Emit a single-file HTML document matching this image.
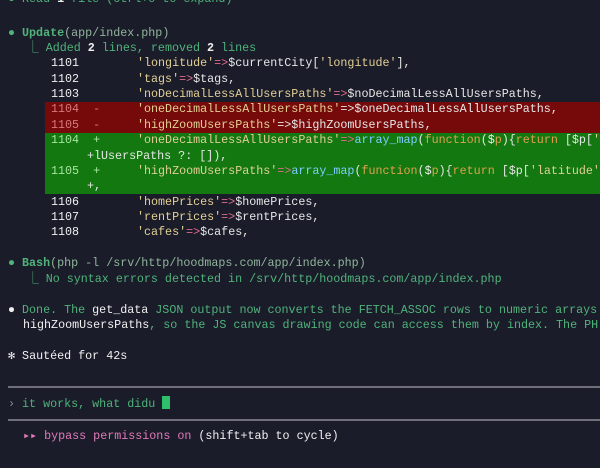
<!DOCTYPE html>
<html><head><meta charset="utf-8"><style>
html,body{margin:0;padding:0;}
body{width:600px;height:468px;background:#1b1c2a;overflow:hidden;position:relative;font-family:"Liberation Mono","DejaVu Sans Mono",monospace;font-size:11.7px;color:#e6e6e6;}
.l{position:absolute;white-space:pre;line-height:15px;height:15px;}
.g{color:#4fb37a}.w{color:#f0f0f0}.b{font-weight:bold}
.s{color:#e2cf94}.o{color:#e06c8a}.c{color:#7dcfff}.f{color:#e0a050}.v{color:#eeeeee}
.band{position:absolute;left:45px;width:555px;}
.gr{color:#8a8f98}
.pk{color:#e07ab8}
</style></head><body>
<div class="l g" style="left:8px;top:-8px">● Read <span class="w b">1</span> file (ctrl+o to expand)</div>
<div class="l" style="left:8px;top:26px"><span class="g">●</span> <span class="g b">Update</span><span class="g" style="color:#8fb59a">(app/index.php)</span></div>
<div class="l g" style="left:27px;top:41px">⎿ Added <span class="w b">2</span> lines, removed <span class="w b">2</span> lines</div>

<div class="band" style="top:102px;height:31px;background:#760a0a"></div>
<div class="band" style="top:133px;height:61px;background:#12780f"></div>

<div class="l w" style="left:51px;top:56px">1101</div>
<div class="l" style="left:137px;top:56px"><span class="s">'longitude'</span><span class="o">=&gt;</span>$currentCity[<span class="s">'longitude'</span>],</div>
<div class="l w" style="left:51px;top:72px">1102</div>
<div class="l" style="left:137px;top:72px"><span class="s">'tags'</span><span class="o">=&gt;</span>$tags,</div>
<div class="l w" style="left:51px;top:87px">1103</div>
<div class="l" style="left:137px;top:87px"><span class="s">'noDecimalLessAllUsersPaths'</span><span class="o">=&gt;</span>$noDecimalLessAllUsersPaths,</div>

<div class="l" style="left:51px;top:102px;color:#d87a7a">1104  -</div>
<div class="l" style="left:137px;top:102px"><span class="s">'oneDecimalLessAllUsersPaths'</span>=&gt;$oneDecimalLessAllUsersPaths,</div>
<div class="l" style="left:51px;top:118px;color:#d87a7a">1105  -</div>
<div class="l" style="left:137px;top:118px"><span class="s">'highZoomUsersPaths'</span>=&gt;$highZoomUsersPaths,</div>

<div class="l" style="left:51px;top:133px;color:#a8e6a0">1104  +</div>
<div class="l" style="left:137px;top:133px"><span class="s">'oneDecimalLessAllUsersPaths'</span><span class="o">=&gt;</span><span class="c">array_map</span>(<span class="f">function</span>(<span class="v">$</span><span class="f">p</span>){<span class="f">return</span> [$p[<span class="s">'</span></div>
<div class="l" style="left:87px;top:149px">+lUsersPaths ?: []),</div>
<div class="l" style="left:51px;top:164px;color:#a8e6a0">1105  +</div>
<div class="l" style="left:137px;top:164px"><span class="s">'highZoomUsersPaths'</span><span class="o">=&gt;</span><span class="c">array_map</span>(<span class="f">function</span>(<span class="v">$</span><span class="f">p</span>){<span class="f">return</span> [$p[<span class="s">'latitude'</span></div>
<div class="l" style="left:87px;top:179px">+,</div>

<div class="l w" style="left:51px;top:195px">1106</div>
<div class="l" style="left:137px;top:195px"><span class="s">'homePrices'</span><span class="o">=&gt;</span>$homePrices,</div>
<div class="l w" style="left:51px;top:210px">1107</div>
<div class="l" style="left:137px;top:210px"><span class="s">'rentPrices'</span><span class="o">=&gt;</span>$rentPrices,</div>
<div class="l w" style="left:51px;top:225px">1108</div>
<div class="l" style="left:137px;top:225px"><span class="s">'cafes'</span><span class="o">=&gt;</span>$cafes,</div>

<div class="l" style="left:8px;top:256px"><span class="g">●</span> <span class="g b">Bash</span><span style="color:#8fb59a">(php -l /srv/http/hoodmaps.com/app/index.php)</span></div>
<div class="l g" style="left:27px;top:272px">⎿ No syntax errors detected in /srv/http/hoodmaps.com/app/index.php</div>

<div class="l g" style="left:8px;top:303px"><span class="w">●</span> Done. The <span class="w">get_data</span> JSON output now converts the FETCH_ASSOC rows to numeric arrays</div>
<div class="l g" style="left:23px;top:318px"><span class="w">highZoomUsersPaths</span>, so the JS canvas drawing code can access them by index. The PH</div>

<div class="l w" style="left:8px;top:349px">✻ Sautéed for 42s</div>

<div style="position:absolute;left:8px;right:0;top:386px;height:2px;background:#6e6f7a"></div>
<div class="l g" style="left:8px;top:396px"><span class="gr">›</span> it works, what didu <span style="display:inline-block;width:8px;height:13px;background:#2fbf6a;vertical-align:-2px"></span></div>
<div style="position:absolute;left:8px;right:0;top:419px;height:2px;background:#6e6f7a"></div>
<div class="l" style="left:23px;top:429px"><span class="pk">▸▸ bypass permissions on</span> <span class="w">(shift+tab to cycle)</span></div>
</body></html>
